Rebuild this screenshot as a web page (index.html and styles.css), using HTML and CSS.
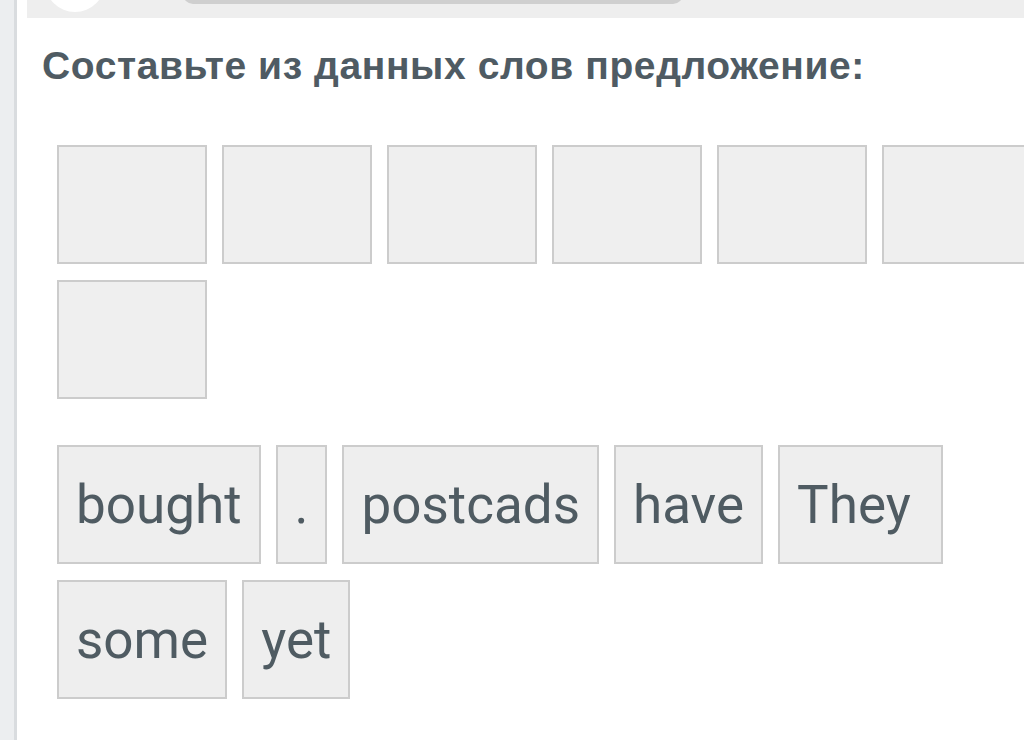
FILE: index.html
```html
<!DOCTYPE html>
<html lang="ru">
  <head>
    <meta charset="UTF-8" />
    <meta name="viewport" content="width=device-width, initial-scale=1.0" />
    <title>Составьте предложение</title>
    <link rel="stylesheet" href="styles.css">
  </head>
  <body>
    <div class="page">
      <div class="rail"></div>
      <div class="main">
        <!-- верхняя панель, обрезана сверху -->
        <div class="topbar">
          <div class="avatar"></div>
          <div class="progress"></div>
        </div>

        <div class="task">
          <h2 class="title">Составьте из данных слов предложение:</h2>

          <div class="slots">
            <div class="slot"></div>
            <div class="slot"></div>
            <div class="slot"></div>
            <div class="slot"></div>
            <div class="slot"></div>
            <div class="slot"></div>
            <div class="slot"></div>
          </div>

          <div class="words">
            <div class="word">bought</div>
            <div class="word">.</div>
            <div class="word">postcads</div>
            <div class="word">have</div>
            <div class="word">They </div>
            <div class="word">some</div>
            <div class="word">yet</div>
          </div>
        </div>
      </div>
    </div>
  </body>
</html>
```

FILE: styles.css
```css
html,
body {
  margin: 0;
  height: 100%;
  overflow: hidden;
  background: #fff;
  font-family: Roboto, "Noto Sans", sans-serif;
}

.page {
  display: flex;
  height: 100%;
}

/* левая серая полоса */
.rail {
  width: 14px;
  flex-shrink: 0;
  background: #eceef0;
  border-right: 3px solid #d9dcdf;
}

.main {
  flex: 1;
  padding-left: 10px;
  min-width: 0;
}

.topbar {
  display: flex;
  align-items: flex-end;
  height: 18px;
  background: #eeeeee;
  padding-left: 18px;
  overflow: hidden;
}

.avatar {
  width: 60px;
  height: 60px;
  border-radius: 50%;
  background: #fff;
  margin-bottom: 6px;
  flex-shrink: 0;
}

.progress {
  width: 500px;
  height: 20px;
  border-radius: 10px;
  background: #cfcfcf;
  margin-left: 78px;
  margin-bottom: 14px;
}

.task {
  padding-left: 15px;
}

.title {
  margin: 25px 0 0;
  font-family: "Liberation Sans", Arial, sans-serif;
  font-size: 39px;
  line-height: 45px;
  letter-spacing: 0.6px;
  font-weight: 700;
  color: #4f5b63;
}

.slots,
.words {
  display: flex;
  flex-wrap: wrap;
  gap: 16px 15px;
  width: 1000px;
  margin-left: 15px;
}

.slots {
  margin-top: 57px;
}

.words {
  margin-top: 46px;
}

.slot,
.word {
  box-sizing: border-box;
  height: 119px;
  border: 2px solid #cccccc;
  background: #efefef;
}

.slot {
  width: 150px;
}

.word {
  display: flex;
  align-items: center;
  padding: 0 17px;
  font-size: 53px;
  white-space: pre;
  color: #4f5b62;
  background: #eeeeee;
}
```
